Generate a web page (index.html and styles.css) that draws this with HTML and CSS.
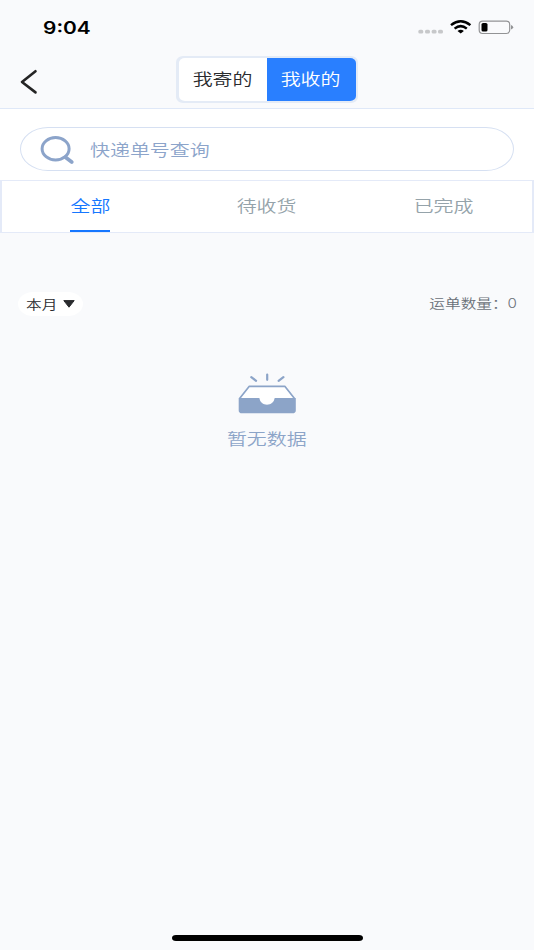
FILE: index.html
```html
<!DOCTYPE html>
<html lang="zh-CN">
<head>
<meta charset="utf-8">
<title>我的快递</title>
<link rel="stylesheet" href="styles.css">
</head>
<body>
<div class="screen">
  <header class="header">
    <div class="status">
      <span class="time">9:04</span>
      <svg class="status-icons" width="96" height="18" viewBox="0 0 96 18">
        <g fill="#c7c8ca"><rect x="0.3" y="11.8" width="5" height="3.8" rx="1.6"/><rect x="7" y="11.8" width="5" height="3.8" rx="1.6"/><rect x="13.6" y="11.8" width="5" height="3.8" rx="1.6"/><rect x="20" y="11.8" width="5" height="3.8" rx="1.6"/></g>
        <g fill="none" stroke="#000" stroke-width="2.5"><path d="M33 7.1Q42.7-.7 52.4 7.1"/><path d="M36.6 10.6Q42.7 5.6 48.8 10.6"/></g>
        <path d="M39.5 13Q42.7 10.6 45.9 13L42.7 15.6Z"/>
        <rect x="61.2" y="3.1" width="30.5" height="12.4" rx="3.4" fill="none" stroke="#929395" stroke-width="1.2"/>
        <rect x="63.5" y="5" width="6" height="8.6" rx="1.6"/>
        <path d="M93 7.1Q95.2 7.8 95.2 9.3T93 11.6Z" fill="#929395"/>
      </svg>
    </div>
    <nav class="nav">
      <svg class="back" width="20" height="26" viewBox="0 0 20 26"><path d="M16.5 2.2 3 13 16.5 23.4" fill="none" stroke="#242424" stroke-width="2.6" stroke-linecap="round" stroke-linejoin="round"/></svg>
      <div class="segment">
        <div class="segment-item"><span class="wide">我寄的</span></div>
        <div class="segment-item active"><span class="wide">我收的</span></div>
      </div>
    </nav>
  </header>
  <section class="search-area">
    <div class="search">
      <svg width="36" height="30" viewBox="0 0 36 30" fill="none" stroke="#8ca4ca"><ellipse cx="15.6" cy="14.8" rx="13.5" ry="11.2" stroke-width="3"/><path d="m25.5 23.2 6.2 4.8" stroke-width="3.7" stroke-linecap="round"/></svg>
      <span class="wide from-left">快递单号查询</span>
    </div>
  </section>
  <nav class="tabs">
    <div class="tab active"><span class="wide">全部</span></div>
    <div class="tab"><span class="wide">待收货</span></div>
    <div class="tab"><span class="wide">已完成</span></div>
  </nav>
  <main class="content">
    <div class="filters">
      <div class="month"><span class="wide from-left">本月</span><svg width="12" height="8" viewBox="0 0 12 8"><path d="M.8.6h10.4L6 7.2Z" fill="#292b2e" stroke="#292b2e" stroke-linejoin="round"/></svg></div>
      <div class="count"><span class="wide from-right">运单数量：<span class="number">0</span></span></div>
    </div>
    <div class="empty">
      <svg width="60" height="42" viewBox="0 0 60 42">
        <g stroke="#8ca4c8" stroke-width="2.2" stroke-linecap="round"><path d="m14.3 4.1 4.8 3.7M30.2 1.5v5.3M46.4 4.1l-4.8 3.7" fill="none"/></g>
        <path d="M2.6 25.5 12.3 13.3h35.5l9.7 12.2" fill="#fff" stroke="#8ca4c8" stroke-width="1.7" stroke-linejoin="round"/>
        <path d="M1.7 25h20.8c.3 4 3.6 6.7 7.5 6.7s7.2-2.7 7.5-6.7h21.3v12.4q0 2.8-3.4 2.8H5.1q-3.4 0-3.4-2.8Z" fill="#8ca4c8"/>
        <path d="M22.7 24.3h14.7c0 4-3.4 6.8-7.4 6.8s-7.3-2.8-7.3-6.8Z" fill="#fff"/>
      </svg>
      <span class="wide">暂无数据</span>
    </div>
  </main>
  <footer class="home"><div class="home-bar"></div></footer>
</div>
</body>
</html>
```
FILE: styles.css
```css
* { box-sizing: border-box; }
body { margin: 0; background: #f9fafc; }
.screen {
  width: 534px;
  height: 950px;
  display: flex;
  flex-direction: column;
  background: #f9fafc;
  font-family: "Liberation Sans", "Noto Sans CJK SC", sans-serif;
  font-size: 16.4px;
  line-height: 24px;
  color: #292b2e;
  overflow: hidden;
}
svg { display: block; flex: none; }
.wide {
  display: inline-block;
  font-family: "Noto Sans CJK SC", sans-serif;
  font-weight: 350;
  white-space: nowrap;
  transform: scaleX(1.217);
}
.from-left { transform-origin: left; }
.from-right { transform-origin: right; }
.header { height: 109px; border-bottom: 1px solid #dfe8f8; }
.status {
  height: 56px;
  padding: 15px 20px 0 43px;
  display: flex;
  justify-content: space-between;
}
.time {
  height: 24px;
  margin-top: 1px;
  font-family: Inter, sans-serif;
  font-size: 17.2px;
  font-weight: 600;
  color: #000;
  transform: scaleX(1.217);
  transform-origin: left;
}
.status-icons { margin-top: 3px; }
.nav {
  display: grid;
  grid-template-columns: 176px 182px 1fr;
}
.back { margin: 13px 0 0 19px; }
.segment {
  height: 47px;
  display: flex;
  padding: 2px 2.5px;
  background: #e4ebf6;
  border-radius: 7px / 6px;
}
.segment-item {
  flex: 1;
  display: flex;
  align-items: center;
  justify-content: center;
  padding: 0 1px 3px 0;
  background: #fff;
  border-radius: 6px 0 0 6px / 5px 0 0 5px;
}
.segment-item.active {
  background: #297fff;
  color: #fff;
  border-radius: 0 6px 6px 0 / 0 5px 5px 0;
}
.search-area {
  height: 71px;
  padding: 18px 20px 0;
  background: #fff;
}
.search {
  height: 44px;
  display: flex;
  align-items: center;
  gap: 14px;
  padding-left: 19px;
  border: 1px solid #d6e0f2;
  border-width: 1px 1.5px;
  border-radius: 28px / 22px;
  color: #8ca4ca;
}
.tabs {
  height: 53px;
  display: grid;
  grid-template-columns: repeat(3, 1fr);
  background: #fff;
  border: 1px solid #e4eaf8;
  border-width: 1px 2px 1px;
  color: #95a3aa;
}
.tab {
  display: flex;
  flex-direction: column;
  align-items: center;
  padding-top: 12px;
}
.tab.active { color: #1677ff; }
.tab.active::after {
  content: "";
  width: 40px;
  height: 2px;
  margin-top: 13px;
  background: #1677ff;
}
.content { flex: 1; }
.filters {
  display: flex;
  justify-content: space-between;
  padding: 59px 17px 0 18px;
  font-size: 12.87px;
}
.month {
  width: 65px;
  height: 24px;
  display: flex;
  align-items: center;
  gap: 11px;
  padding-left: 8px;
  background: #fff;
  border-radius: 15px / 12px;
}
.count { color: #697078; margin-top: -1px; }
.number { font-family: Inter, sans-serif; font-size: 12.5px; }
.empty {
  display: flex;
  flex-direction: column;
  align-items: center;
  margin-top: 57px;
  gap: 11px;
  color: #8ca4c8;
}
.home {
  height: 16px;
  display: flex;
  justify-content: center;
}
.home-bar {
  width: 191px;
  height: 6px;
  margin-top: .5px;
  background: #000;
  border-radius: 4px / 3px;
}
```
